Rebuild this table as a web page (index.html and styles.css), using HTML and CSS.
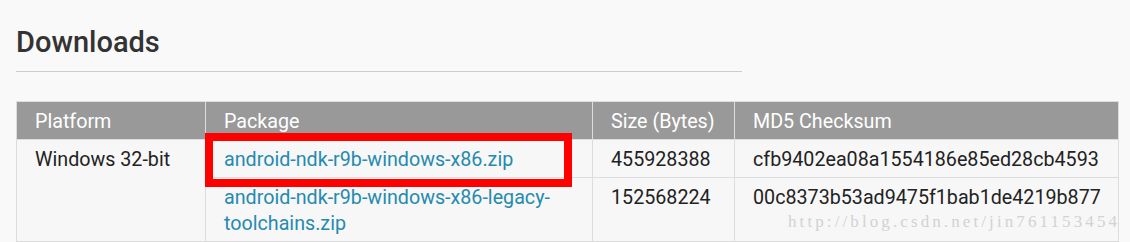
FILE: index.html
```html
<!DOCTYPE html>
<html>
<head>
<meta charset="utf-8">
<link rel="stylesheet" href="styles.css">
</head>
<body>
<div class="page">
  <h2 class="title">Downloads</h2>
  <div class="rule"></div>
  <div class="table-wrap">
    <table class="downloads">
      <colgroup>
        <col class="c-platform">
        <col class="c-package">
        <col class="c-size">
        <col class="c-md5">
      </colgroup>
      <thead>
        <tr>
          <th>Platform</th>
          <th>Package</th>
          <th>Size (Bytes)</th>
          <th>MD5 Checksum</th>
        </tr>
      </thead>
      <tbody>
        <tr>
          <td rowspan="2">Windows 32-bit</td>
          <td><a href="#">android-ndk-r9b-windows-x86.zip</a></td>
          <td>455928388</td>
          <td>cfb9402ea08a1554186e85ed28cb4593</td>
        </tr>
        <tr>
          <td><a href="#">android-ndk-r9b-windows-x86-legacy-toolchains.zip</a></td>
          <td>152568224</td>
          <td>00c8373b53ad9475f1bab1de4219b877</td>
        </tr>
      </tbody>
    </table>
    <div class="highlight"></div>
    <div class="watermark">http://blog.csdn.net/jin761153454</div>
  </div>
</div>
</body>
</html>
```

FILE: styles.css
```css
html, body {
  margin: 0;
  padding: 0;
  background: #f9f9f9;
}

.page {
  padding-left: 16px;
  font-family: Roboto, "Liberation Sans", sans-serif;
}

.title {
  margin: 24px 0 0 0;
  font-size: 29px;
  line-height: 36px;
  font-weight: 500;
  color: #333333;
}

.rule {
  width: 726px;
  height: 1px;
  background: #cccccc;
  margin-top: 11px;
}

.table-wrap {
  position: relative;
  margin-top: 29px;
}

.downloads {
  border-collapse: collapse;
  table-layout: fixed;
  width: 1102px;
  font-size: 19.7px;
  line-height: 26px;
  color: #222222;
}

.c-platform { width: 189px; }
.c-package { width: 387px; }
.c-size { width: 142px; }
.c-md5 { width: 384px; }

.downloads th,
.downloads td {
  border: 1px solid #dddddd;
  padding: 7px 18px 4px 18px;
  text-align: left;
  vertical-align: top;
}

.downloads th {
  background: #999999;
  color: #ffffff;
  font-weight: 400;
}

.downloads td {
  background: #f7f7f7;
}

.downloads a {
  color: #258aaf;
  text-decoration: none;
}

.highlight {
  position: absolute;
  left: 189px;
  top: 32px;
  width: 351px;
  height: 38px;
  border: 8px solid #ff0000;
}

.watermark {
  position: absolute;
  left: 772px;
  top: 111px;
  font-family: "Liberation Serif", serif;
  font-size: 17px;
  letter-spacing: 3.1px;
  color: #d2d2d2;
  white-space: nowrap;
}
```
